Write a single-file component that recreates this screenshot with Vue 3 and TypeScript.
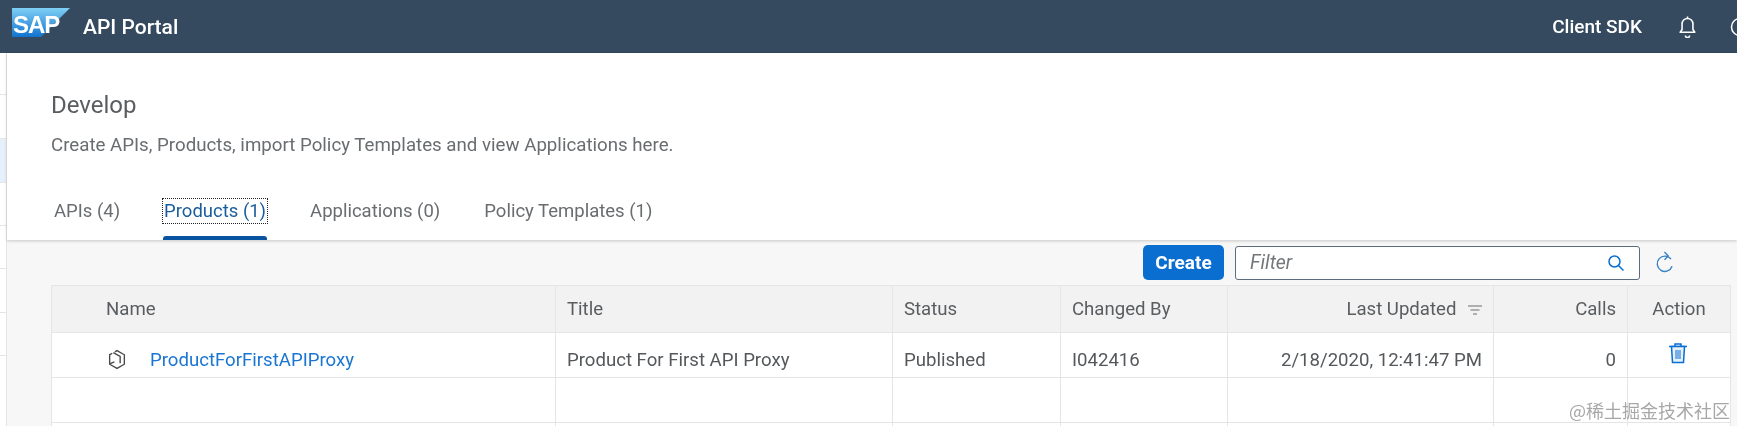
<script setup lang="ts">
const tabs = [
  { label: 'APIs (4)', active: false },
  { label: 'Products (1)', active: true },
  { label: 'Applications (0)', active: false },
  { label: 'Policy Templates (1)', active: false },
]
const sideRows = [
  { h: 42, on: false },
  { h: 44, on: false },
  { h: 44, on: true },
  { h: 43, on: false },
  { h: 43, on: false },
  { h: 44, on: false },
  { h: 43, on: false },
]
</script>

<template>
  <div class="page">
    <header class="shell">
      <div class="brand">
        <svg class="logo" viewBox="0 0 58 29" width="58" height="29">
          <defs>
            <linearGradient id="sapBlue" x1="0" y1="0" x2="0" y2="1">
              <stop offset="0" stop-color="#7fd0f5" />
              <stop offset="1" stop-color="#1273cf" />
            </linearGradient>
          </defs>
          <polygon points="0,0 58,0 29,29 0,29" fill="url(#sapBlue)" />
        </svg>
        <span class="logo-text">SAP</span>
      </div>
      <span class="shell-title">API Portal</span>
      <span class="shell-link">Client SDK</span>
      <svg class="bell" viewBox="0 0 20 22" width="21" height="23" fill="none" stroke="#fff" stroke-width="1.5">
        <path d="M3 16.500h14l-1.800-2.600V8.500a5.200 5.200 0 0 0-10.400 0v5.400z" stroke-linejoin="round" />
        <path d="M8 19.500a2 2 0 0 0 4 0M10 1.500v1.500" />
      </svg>
      <svg class="help" viewBox="0 0 20 20" width="20" height="20" fill="none" stroke="#fff" stroke-width="1.500">
        <circle cx="10" cy="10" r="8.500" />
      </svg>
    </header>

    <div class="body">
      <aside class="side">
        <div v-for="(r, i) in sideRows" :key="i" class="side-row" :class="{ on: r.on }" :style="{ height: r.h + 'px' }"></div>
      </aside>

      <main class="main">
        <section class="head">
          <h1>Develop</h1>
          <p>Create APIs, Products, import Policy Templates and view Applications here.</p>
          <nav class="tabs">
            <div v-for="t in tabs" :key="t.label" class="tab" :class="{ active: t.active }">
              <span>{{ t.label }}</span>
            </div>
          </nav>
        </section>

        <section class="content">
          <div class="toolbar">
            <button class="create">Create</button>
            <div class="filter">
              <span>Filter</span>
              <svg viewBox="0 0 18 18" width="18" height="18" fill="none" stroke="#0a6ed1" stroke-width="1.500">
                <circle cx="7.500" cy="7.500" r="5.500" />
                <path d="M11.500 11.500l5 5" />
              </svg>
            </div>
            <svg class="refresh" viewBox="0 0 20 22" width="22" height="24" fill="none" stroke="#3b83c9" stroke-width="1.300">
              <path d="M15.500 7.500a7 7 0 1 0 1 6.500" />
              <path d="M9.500 1l3.500 3.500-3.500 3.500" />
            </svg>
          </div>

          <table class="grid">
            <colgroup>
              <col style="width: 504px" />
              <col style="width: 337px" />
              <col style="width: 168px" />
              <col style="width: 167px" />
              <col style="width: 266px" />
              <col style="width: 134px" />
              <col style="width: 103px" />
            </colgroup>
            <thead>
              <tr>
                <th class="name">Name</th>
                <th>Title</th>
                <th>Status</th>
                <th>Changed By</th>
                <th class="right">
                  Last Updated
                  <svg class="sort" viewBox="0 0 14 10" width="14" height="10" stroke="#6a6d70" stroke-width="1.200">
                    <path d="M0 1h14M2.500 5h9M5 9h4" />
                  </svg>
                </th>
                <th class="right">Calls</th>
                <th class="center">Action</th>
              </tr>
            </thead>
            <tbody>
              <tr class="filled">
                <td class="name">
                  <div class="name-cell">
                    <svg viewBox="1 0 18 20" width="20" height="21" fill="none" stroke="#4a4a4a" stroke-width="1.300">
                      <path d="M8 2.700l2-1.200 7 4v9l-7 4-7-4v-9l2.500-1.400" />
                      <path d="M6.500 3.500l6.500 3.500v6.500" />
                      <path d="M3.500 14l4-1.800" />
                    </svg>
                    <a>ProductForFirstAPIProxy</a>
                  </div>
                </td>
                <td>Product For First API Proxy</td>
                <td>Published</td>
                <td>I042416</td>
                <td class="right">2/18/2020, 12:41:47 PM</td>
                <td class="right">0</td>
                <td class="action">
                  <svg class="trash" viewBox="0 0 20 22" width="20" height="22" fill="none" stroke="#0a6ed1" stroke-width="1.500">
                    <path d="M1 4.500h18M7 4.500V2h6v2.500" />
                    <path d="M3.500 4.500l1 16h11l1-16z" fill="#e5f0fa" />
                    <path d="M8 8v9M10 8v9M12 8v9" stroke-width="1" />
                  </svg>
                </td>
              </tr>
              <tr class="empty"><td v-for="n in 7" :key="n"></td></tr>
              <tr class="empty"><td v-for="n in 7" :key="n"></td></tr>
            </tbody>
          </table>
        </section>
      </main>
    </div>

    <div class="mark">@稀土掘金技术社区</div>
  </div>
</template>

<style>
html, body { margin: 0; overflow: hidden; }
</style>

<style scoped>
.page {
  position: relative;
  width: 1737px;
  height: 426px;
  overflow: hidden;
  font-family: Roboto, "Liberation Sans", sans-serif;
  background: #fff;
  filter: blur(0.4px);
}
.shell {
  height: 53px;
  background: #354a5f;
  display: flex;
  align-items: center;
  color: #fff;
}
.brand { position: relative; margin: -8px 0 0 12px; height: 29px; }
.logo { display: block; }
.logo-text {
  position: absolute;
  left: 1px;
  top: 4px;
  font: 700 24px/25px "Liberation Sans", sans-serif;
  color: #fff;
  letter-spacing: -1px;
}
.shell-title { margin-left: 13px; font-size: 21px; font-weight: 500; }
.shell-link { margin-left: auto; font-size: 19px; font-weight: 500; }
.bell { margin-left: 35px; }
.help { margin-left: 32px; margin-right: -13px; }

.body { display: flex; height: 373px; }
.side { width: 6px; flex: none; background: #fff; }
.side-row { border-bottom: 1px solid #e5e5e5; box-sizing: border-box; }
.side-row.on { background: #e5f0fa; }

.main { flex: 1; border-left: 1px solid #e5e5e5; display: flex; flex-direction: column; min-width: 0; }
.head {
  height: 187px;
  box-sizing: border-box;
  background: #fff;
  padding: 38px 0 0 44px;
  display: flex;
  flex-direction: column;
  box-shadow: 0 1px 3px rgba(0, 0, 0, 0.2);
  position: relative;
}
h1 { margin: 0; font-size: 24px; line-height: 28px; font-weight: 400; color: #5a5d60; }
p { margin: 15px 0 0; font-size: 18.7px; line-height: 22px; color: #6a6d70; }
.tabs { margin-top: auto; display: flex; gap: 42px; padding-left: 2px; }
.tab { height: 41px; position: relative; color: #6a6d70; font-size: 18.5px; line-height: 24px; box-sizing: border-box; }
.tab span { display: block; padding: 0 1px; }
.tab.active { color: #1a5d9e; }
.tab.active span { outline: 1px dotted #222; }
.tab.active::after {
  content: "";
  position: absolute;
  left: 0;
  right: 0;
  bottom: 0;
  height: 4px;
  background: #0854a0;
  border-radius: 3px 3px 0 0;
}

.content { flex: 1; background: #f7f7f7; padding: 5px 0 0 44px; min-height: 0; }
.toolbar { display: flex; align-items: center; height: 35px; margin-bottom: 5px; width: 1679px; }
.create {
  margin-left: auto;
  width: 81px;
  height: 35px;
  border: none;
  border-radius: 5px;
  background: #0a6ed1;
  color: #fff;
  font: 700 19px Roboto, sans-serif;
  padding: 0;
}
.filter {
  margin-left: 11px;
  width: 405px;
  height: 34px;
  box-sizing: border-box;
  border: 1px solid #5d6c7c;
  border-radius: 3px;
  background: #fff;
  display: flex;
  align-items: center;
  justify-content: space-between;
  padding: 0 14px 0 14px;
  font-size: 19.5px;
  font-style: italic;
  color: #74777a;
}
.refresh { margin: 0 54px 0 14px; flex: none; }

.grid {
  table-layout: fixed;
  border-collapse: collapse;
  width: 1679px;
  background: #fff;
  color: #55585b;
  font-size: 18.6px;
}
.grid th, .grid td {
  border: 1px solid #e5e5e5;
  padding: 0 11px;
  text-align: left;
  font-weight: 400;
  white-space: nowrap;
  box-sizing: border-box;
}
.grid th { height: 47px; background: #f2f2f2; color: #5a5d60; }
.grid td { height: 45px; }
.grid .filled td { padding-top: 9px; }
.grid .name { padding-left: 54px; }
.grid .right { text-align: right; }
.grid .center { text-align: center; }
.sort { margin-left: 7px; }
.name-cell { display: flex; align-items: center; gap: 23px; margin-left: 1px; }
.name-cell a { color: #1a76d2; }
.grid .filled .action { padding: 9px 2px 0 0; vertical-align: top; }
.trash { display: block; margin: 0 auto; }
.mark {
  position: absolute;
  right: 7px;
  top: 397px;
  font: 18px "Noto Sans CJK SC", sans-serif;
  color: rgba(130, 130, 130, 0.7);
}
</style>
